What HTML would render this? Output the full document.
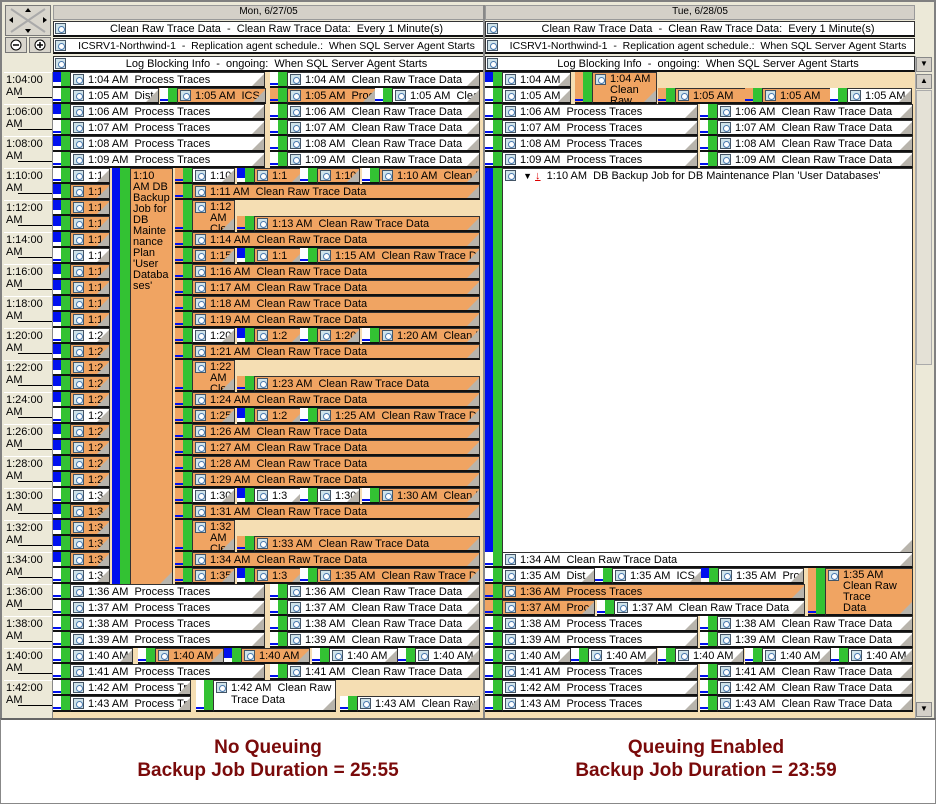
<!DOCTYPE html>
<html><head><meta charset="utf-8">
<style>
*{box-sizing:border-box;margin:0;padding:0}
body{width:936px;height:804px;background:#fff;font-family:"Liberation Sans",sans-serif;font-size:11px;position:relative;overflow:hidden}
.a{position:absolute}
.box{position:absolute;border:1px solid #333;border-bottom:2px solid #111;overflow:hidden;white-space:nowrap;line-height:14px;padding-left:17px;color:#000}
.box:after{content:"";position:absolute;right:0;bottom:0;border-left:12px solid transparent;border-bottom:12px solid #b8b4ac}
.ic{position:absolute;left:2px;top:1px;width:11px;height:11px;border:1px solid #456;background:#cfe3ea}
.ic:after{content:"";position:absolute;left:2px;top:2px;width:5px;height:5px;border:1px solid #4a7ab0;border-radius:50%;background:#fff}
</style></head><body>
<div class="a" style="left:0;top:0;width:936px;height:721px;background:#ece9d8;border:2px solid #808080"></div>
<div class="a" style="left:0;top:718px;width:936px;height:86px;background:#fff;border:1px solid #888;border-top:2px solid #666"></div>
<div class="a" style="left:0;top:736px;width:536px;text-align:center;font-weight:bold;font-size:19px;color:#7a0a0a;line-height:23px">No Queuing<br>Backup Job Duration = 25:55</div>
<div class="a" style="left:436px;top:736px;width:540px;text-align:center;font-weight:bold;font-size:19px;color:#7a0a0a;line-height:23px">Queuing Enabled<br>Backup Job Duration = 23:59</div>
<div id="g"></div>
<script>
var g=document.getElementById('g'),h='';
function R(x,y,w,hh,bg,ex){h+='<div class="a" style="left:'+x+'px;top:'+y+'px;width:'+w+'px;height:'+hh+'px;background:'+bg+';'+(ex||'')+'"></div>';}
function T(x,y,w,hh,s,ex){h+='<div class="a" style="left:'+x+'px;top:'+y+'px;width:'+w+'px;height:'+hh+'px;'+(ex||'')+'">'+s+'</div>';}
var OR='#f0a462',BG='#f5deb3',GR='#33c233',BL='#0010ee';
R(5,5,46,31,'#d8d5cc','border:1px solid #777');
T(5,5,46,31,'<svg width="46" height="31"><path d="M6 4L40 27M40 4L6 27" stroke="#aaa" stroke-width="2"/><path d="M23 3l-3 4h6zM23 28l-3-4h6zM4 15l4-3v6zM42 15l-4-3v6z" fill="#000"/></svg>');
R(5,37,22,16,'#d8d5cc','border:1px solid #777');R(29,37,22,16,'#d8d5cc','border:1px solid #777');
T(5,37,22,16,'<svg width="22" height="16"><circle cx="11" cy="8" r="5" fill="#fff" stroke="#000"/><path d="M8 8h6" stroke="#000" stroke-width="1.5"/></svg>');
T(29,37,22,16,'<svg width="22" height="16"><circle cx="11" cy="8" r="5" fill="#fff" stroke="#000"/><path d="M8 8h6M11 5v6" stroke="#000" stroke-width="1.5"/></svg>');
var days=[[53,431,'Mon, 6/27/05'],[485,430,'Tue, 6/28/05']];
days.forEach(function(d){
 R(d[0],5,d[1],15,'#d4d0c8','border:1px solid #999');
 T(d[0],5,d[1],15,d[2],'text-align:center;font-size:10px;line-height:14px');
 var ad=['Clean Raw Trace Data  -  Clean Raw Trace Data:  Every 1 Minute(s)','ICSRV1-Northwind-1  -  Replication agent schedule.:  When SQL Server Agent Starts','Log Blocking Info  -  ongoing:  When SQL Server Agent Starts'];
 var ys=[21,38,56],fs=[11,10.5,11];
 for(var i=0;i<3;i++){R(d[0],ys[i],d[1],16,'#fff','border:1px solid #333;border-bottom:2px solid #111');
  T(d[0]+2,ys[i]+2,12,12,'<div class="ic" style="left:0;top:0"></div>');
  T(d[0]+16,ys[i],d[1]-16,16,ad[i].replace(/ /g,'&nbsp;'),'text-align:center;line-height:16px;white-space:nowrap;overflow:hidden;font-size:'+fs[i]+'px');}
});
R(53,72,431,646,BG);R(485,72,430,646,BG);R(483,5,2,713,'#888');
for(var i=0;i<40;i+=2){var y=72+i*16;var m=4+i;T(4,y,48,32,'1:'+(m<10?'0'+m:m)+':00<br>AM','background:#ece9d8;line-height:12px;padding:1px 0 0 2px;border-top:1px solid #fff');R(18,y+25,34,1,'#000');}
R(52,72,1,646,'#888');
function ev(x,y,w,hh,bg,txt,sb,ex){
 sb=sb||'#fff';
 R(x,y,8,hh,sb==OR?OR:'#fff','border-bottom:2px solid #111');
 if(sb==BL)R(x,y,8,hh*0.6,BL);else R(x,y+hh-5,8,2,BL);
 R(x+8,y,9,hh,GR,'border-bottom:2px solid #111');
 h+='<div class="box" style="left:'+(x+17)+'px;top:'+y+'px;width:'+(w-17)+'px;height:'+hh+'px;background:'+bg+';'+(ex||'')+'"><div class="ic"></div>'+txt.replace(/  /g,'&nbsp; ')+'</div>';
}
function tm(m){return '1:'+(m<10?'0'+m:m)+' AM';}
function row(r){return 72+r*16;}
for(var r=0;r<6;r++){var m=4+r,y=row(r);
 if(m==5){ev(53,y,106,16,'#fff','1:05 AM  Dist');ev(160,y,106,16,OR,'1:05 AM  ICS','#fff');ev(270,y,106,16,OR,'1:05 AM  Proc',OR);ev(375,y,105,16,'#fff','1:05 AM  Clea');}
 else{ev(53,y,212,16,'#fff',tm(m)+'  Process Traces',r%2?'#fff':BL);ev(270,y,210,16,'#fff',tm(m)+'  Clean Raw Trace Data');}
}
for(var r=6;r<32;r++){var m=4+r,y=row(r),five=m%5==0,lab='1:'+Math.floor(m/10);
 ev(53,y,57,16,five?'#fff':OR,lab,five?'#fff':BL);
 if(five){ev(175,y,60,16,five&&m%10==0?'#fff':OR,tm(m).slice(0,4),OR);ev(237,y,68,16,m==30?'#fff':OR,lab,BL);
  if(m==10||m==20||m==30){ev(300,y,60,16,m==30?'#fff':OR,tm(m).slice(0,4),'#fff');ev(362,y,118,16,OR,tm(m)+'  Clean R');}
  else ev(300,y,180,16,OR,tm(m)+'  Clean Raw Trace Dat');}
 else if(m==12||m==22||m==32){ev(175,y,60,32,OR,tm(m).replace(' ','<br>')+'<br>Clean',OR,'white-space:normal;line-height:11px;padding-top:1px');}
 else if(m==13||m==23||m==33){ev(237,y,243,16,OR,tm(m)+'  Clean Raw Trace Data',OR);}
 else ev(175,y,305,16,OR,tm(m)+'  Clean Raw Trace Data',OR);
}
R(112,168,8,418,BL);R(120,168,10,418,GR);
h+='<div class="box" style="left:130px;top:168px;width:43px;height:418px;background:'+OR+';padding:2px 2px;white-space:normal;line-height:11px;font-size:11px">1:10<br>AM&nbsp;DB Backup Job for DB Mainte nance Plan \'User Databa ses\'</div>';
for(var r=32;r<40;r++){var m=4+r,y=row(r);
 if(m==40){ev(53,y,80,16,'#fff','1:40 AM');ev(138,y,86,16,OR,'1:40 AM');ev(224,y,86,16,OR,'1:40 AM',BL);ev(312,y,86,16,'#fff','1:40 AM');ev(398,y,82,16,'#fff','1:40 AM');}
 else if(m==42){ev(53,y,138,16,'#fff','1:42 AM  Process Tra');ev(196,y,140,32,'#fff','1:42 AM&nbsp; Clean Raw<br>Trace Data','#fff','white-space:normal;line-height:12px;padding-top:1px');}
 else if(m==43){ev(53,y,138,16,'#fff','1:43 AM  Process Tra');ev(340,y,140,16,'#fff','1:43 AM  Clean Raw T');}
 else{ev(53,y,212,16,'#fff',tm(m)+'  Process Traces');ev(270,y,210,16,'#fff',tm(m)+'  Clean Raw Trace Data');}
}
ev(485,72,86,16,'#fff','1:04 AM',BL);ev(485,88,86,16,'#fff','1:05 AM');
ev(575,72,82,32,OR,'1:04 AM<br>Clean Raw<br>Trace Data',OR,'white-space:normal;line-height:11px;padding-top:1px');
ev(658,88,102,16,OR,'1:05 AM',OR);ev(745,88,102,16,OR,'1:05 AM',OR);ev(830,88,82,16,'#fff','1:05 AM');
for(var r=2;r<6;r++){var m=4+r,y=row(r);ev(485,y,213,16,'#fff',tm(m)+'  Process Traces');ev(700,y,213,16,'#fff',tm(m)+'  Clean Raw Trace Data');}
R(485,168,8,386,BL);R(493,168,9,386,GR);
h+='<div class="box" style="left:502px;top:168px;width:411px;height:386px;background:#fff;padding-left:17px"><div class="ic"></div>&nbsp;<span style="font-size:9px">&#9660;</span> <span style="color:#d00;text-decoration:underline">&#8595;</span>&nbsp; 1:10 AM&nbsp; DB Backup Job for DB Maintenance Plan \'User Databases\'</div>';
ev(485,row(30),428,16,'#fff','1:34 AM  Clean Raw Trace Data');
var y=row(31);ev(485,y,110,16,'#fff','1:35 AM  Dist');ev(595,y,108,16,'#fff','1:35 AM  ICS');ev(701,y,103,16,'#fff','1:35 AM  Proc',BL);
ev(808,y,105,48,OR,'1:35 AM<br>Clean Raw Trace<br>Data',OR,'white-space:normal;line-height:11px;padding-top:1px');
ev(485,row(32),320,16,OR,'1:36 AM  Process Traces',OR);
ev(485,row(33),110,16,OR,'1:37 AM  Proc',OR);ev(597,row(33),208,16,'#fff','1:37 AM  Clean Raw Trace Data');
for(var r=34;r<40;r++){var m=4+r,y=row(r);
 if(m==40){ev(485,y,86,16,'#fff','1:40 AM');ev(571,y,86,16,'#fff','1:40 AM');ev(658,y,86,16,'#fff','1:40 AM');ev(745,y,86,16,'#fff','1:40 AM');ev(831,y,82,16,'#fff','1:40 AM');}
 else{ev(485,y,213,16,'#fff',tm(m)+'  Process Traces');ev(700,y,213,16,'#fff',tm(m)+'  Clean Raw Trace Data');}
}
R(915,56,18,662,'#ece9d8','border-left:1px solid #aaa');
R(916,57,16,15,'#d4d0c8','border:1px solid #888');T(916,57,16,15,'&#9660;','font-size:8px;text-align:center;line-height:14px');
R(916,74,16,15,'#d4d0c8','border:1px solid #888');T(916,74,16,15,'&#9650;','font-size:8px;text-align:center;line-height:14px');
R(916,90,16,275,'#e4e1d6','border:1px solid #aaa');
R(916,702,16,15,'#d4d0c8','border:1px solid #888');T(916,702,16,15,'&#9660;','font-size:8px;text-align:center;line-height:14px');
g.innerHTML=h;
</script>
</body></html>
